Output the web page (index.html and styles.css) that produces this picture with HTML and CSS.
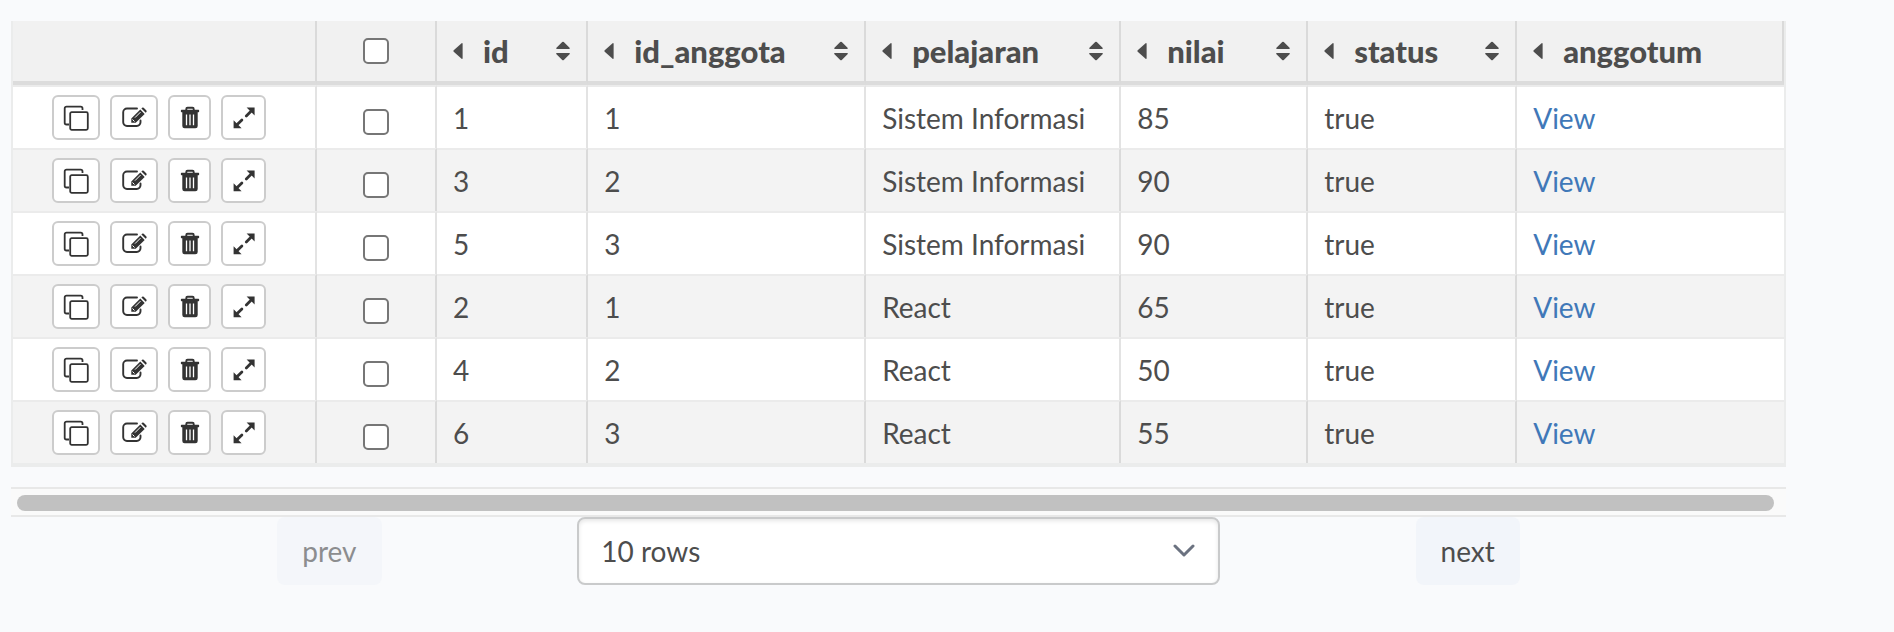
FILE: index.html
```html
<!DOCTYPE html>
<html lang="id">
<head>
<meta charset="utf-8">
<title>nilai</title>
<link rel="stylesheet" href="styles.css">
</head>
<body>
<svg class="sprite" aria-hidden="true">
  <symbol id="clone" viewBox="0 0 26 26">
    <path d="M6 19.500H3.500a1.800 1.800 0 0 1-1.800-1.800V3.500a1.800 1.800 0 0 1 1.800-1.800h14.200a1.800 1.800 0 0 1 1.800 1.800V5" fill="none" stroke="currentColor" stroke-width="1.800"/>
    <rect x="7.200" y="7.200" width="17.600" height="17.600" rx="1.500" fill="none" stroke="currentColor" stroke-width="1.800"/>
  </symbol>
  <symbol id="edit" viewBox="0 0 26 26">
    <path d="M16 3.500H6A3.800 3.800 0 0 0 2.200 7.300v9.900A3.800 3.800 0 0 0 6 21h9.700a3.800 3.800 0 0 0 3.800-3.800V15.500" fill="none" stroke="currentColor" stroke-width="1.900" stroke-linecap="round"/>
    <path d="M10.300 17.800v-4.400L19.300 4.500l4.400 4.400L14.700 17.800zM20.400 3.500l.7-.7q.8-.6 1.600 0l2.700 2.700q.6.800 0 1.600l-.7.700z" fill="currentColor"/>
    <path d="M14 12.600l5.500-5.500M11.500 14.500l2 2" stroke="#fff" stroke-width="1" fill="none"/>
  </symbol>
  <symbol id="trash" viewBox="0 0 20 26">
    <path d="M6.300 5.500V4q0-1.200 1.200-1.200h5q1.200 0 1.200 1.200v1.500" fill="none" stroke="currentColor" stroke-width="1.900"/>
    <path d="M1.500 4.800h17q.7 0 .7 1.200t-.7 1.200h-17Q.8 7.200.8 6t.7-1.200z" fill="currentColor"/>
    <path d="M2.300 7h15.400v14q0 2.300-2.300 2.300H4.600Q2.300 23.300 2.300 21z" fill="currentColor"/>
    <path d="M6.500 9.500v10.800M10 9.500v10.800M13.500 9.500v10.800" stroke="#fff" stroke-width="1.300"/>
  </symbol>
  <symbol id="expand" viewBox="0 0 22 26">
    <path d="M13.600 2.600H21.600V10.600zM8.600 23.200H.6V15.200z" fill="currentColor"/>
    <path d="M13.300 10.900L18 6.200M4.200 19.600l4.700-4.700" stroke="currentColor" stroke-width="2.800" stroke-linecap="round"/>
  </symbol>
  <symbol id="caret" viewBox="0 0 10 18">
    <path d="M9.600 1.500v15q-.3.800-1 .3L.7 9.800q-.7-.8 0-1.600l7.900-7q.7-.5 1 .3z" fill="currentColor"/>
  </symbol>
  <symbol id="sort" viewBox="0 0 14 20">
    <path d="M6.200 1q.8-.7 1.600 0l6 6q.3.800-.6.900H.8q-.9-.1-.6-.9zM6.200 19q.8.700 1.600 0l6-6q.3-.8-.6-.9H.8q-.9.100-.6.900z" fill="currentColor"/>
  </symbol>
</svg>
<main class="grid">
  <table class="table">
    <colgroup>
      <col class="c-actions"><col class="c-check"><col class="c-id"><col class="c-member"><col class="c-subject"><col class="c-score"><col class="c-status"><col>
    </colgroup>
    <thead>
      <tr>
        <th></th>
        <th class="pick"><input type="checkbox" class="box" aria-label="all"></th>
        <th><div class="head"><svg class="caret"><use href="#caret"/></svg><span>id</span><svg class="sort"><use href="#sort"/></svg></div></th>
        <th><div class="head"><svg class="caret"><use href="#caret"/></svg><span>id_anggota</span><svg class="sort"><use href="#sort"/></svg></div></th>
        <th><div class="head"><svg class="caret"><use href="#caret"/></svg><span>pelajaran</span><svg class="sort"><use href="#sort"/></svg></div></th>
        <th><div class="head"><svg class="caret"><use href="#caret"/></svg><span>nilai</span><svg class="sort"><use href="#sort"/></svg></div></th>
        <th><div class="head"><svg class="caret"><use href="#caret"/></svg><span>status</span><svg class="sort"><use href="#sort"/></svg></div></th>
        <th><div class="head"><svg class="caret"><use href="#caret"/></svg><span>anggotum</span></div></th>
      </tr>
    </thead>
    <tbody id="rows"></tbody>
  </table>
  <div class="scroll"><div class="thumb"></div></div>
  <nav class="pager">
    <button class="page" disabled>prev</button>
    <div class="size">
      <select class="select" aria-label="rows"><option>10 rows</option></select>
      <svg class="chevron" viewBox="0 0 22 14"><path d="M2 2l9 9 9-9" fill="none" stroke="currentColor" stroke-width="3" stroke-linecap="round" stroke-linejoin="round"/></svg>
    </div>
    <button class="page">next</button>
  </nav>
</main>
<script src="rows.js"></script>
</body>
</html>
```
FILE: rows.js
```js
const records = [
  [1, 1, "Sistem Informasi", 85],
  [3, 2, "Sistem Informasi", 90],
  [5, 3, "Sistem Informasi", 90],
  [2, 1, "React", 65],
  [4, 2, "React", 50],
  [6, 3, "React", 55]
];
const action = (icon) =>
  `<button class="action action-${icon}" aria-label="${icon}"><svg class="icon icon-${icon}"><use href="#${icon}"/></svg></button>`;
const actions = ["clone", "edit", "trash", "expand"].map(action).join("");

document.getElementById("rows").innerHTML = records.map((r) => `
  <tr>
    <td><div class="actions">${actions}</div></td>
    <td class="pick"><input type="checkbox" class="box" aria-label="${r[0]}"></td>
    ${r.map((v) => `<td>${v}</td>`).join("")}
    <td>true</td>
    <td><a class="link" href="#">View</a></td>
  </tr>`).join("");
```
FILE: styles.css
```css
* { box-sizing: border-box; }
body {
  margin: 0;
  background: #f9fafc;
  color: #4d4d4d;
  font: 28px/36px Lato, "Noto Sans", sans-serif;
}
.sprite { position: absolute; width: 0; height: 0; }
.grid { margin: 21px 108px 0 11px; }

.table {
  width: 100%;
  table-layout: fixed;
  border-collapse: separate;
  border-spacing: 0;
  border: 2px solid #ebecec;
  border-top: 0;
  border-bottom-width: 4px;
}
.c-actions { width: 304px; }
.c-check { width: 6.78%; }
.c-id { width: 8.53%; }
.c-member { width: 15.7%; }
.c-subject { width: 14.4%; }
.c-score { width: 10.56%; }
.c-status { width: 11.8%; }

th, td { padding: 0 16px; text-align: left; border-right: 2px solid #dadada; }
th { height: 64px; background: #f1f1f1; border-bottom: 4px solid #dcdcdc; font-size: 31px; font-weight: 900; }
td { height: 63px; background: #fff; border-top: 2px solid #ebebeb; border-right-color: #e3e3e3; }
tr:nth-child(even) td { background: #f3f3f3; border-right-color: #dadada; }
td:last-child { border-right: 0; }

.head { display: flex; align-items: center; }
.caret { width: 10px; height: 18px; margin-right: 20px; }
.sort { width: 14px; height: 20px; margin-left: auto; }

.actions { display: flex; justify-content: center; gap: 10px; padding-right: 10px; }
.action {
  display: flex;
  align-items: center;
  justify-content: center;
  padding: 0;
  height: 45px;
  border: 2px solid #ccc;
  border-radius: 6px;
  background: #fff;
  color: #333;
}
.action-clone, .action-edit { width: 48px; }
.action-trash { width: 43px; }
.action-expand { width: 45px; }
.icon { flex: none; height: 26px; }
.icon-clone, .icon-edit { width: 26px; }
.icon-trash { width: 20px; }
.icon-expand { width: 22px; }

.pick { text-align: center; }
.box {
  appearance: none;
  display: block;
  width: 26px;
  height: 26px;
  margin: 0 auto;
  border: 2px solid #767676;
  border-radius: 5px;
  background: #fff;
}
td.pick { padding-top: 9px; }
.link { color: #4078b8; text-decoration: none; }

.scroll {
  margin-top: 20px;
  padding: 6px 12px 4px 6px;
  border: solid #e8e8e8;
  border-width: 2px 0;
  background: #fafafa;
}
.thumb { height: 16px; border-radius: 8px; background: #c1c1c1; }

.pager { display: flex; justify-content: space-between; padding: 0 15%; }
.page {
  height: 68px;
  padding: 0 25px;
  border: 0;
  border-radius: 8px;
  background: #f2f5fa;
  color: inherit;
  font: inherit;
}
.page:disabled { color: #8c8d8f; background: #f4f6fa; }
.size { position: relative; width: 51.7%; }
.select {
  appearance: none;
  width: 100%;
  height: 68px;
  padding: 0 22px;
  border: 2px solid #c9cacb;
  border-radius: 8px;
  background: #fff;
  box-shadow: inset 0 2px 4px #0000001a;
  color: inherit;
  font: inherit;
}
.chevron { position: absolute; right: 25px; top: 27px; width: 22px; height: 14px; color: #6b7280; pointer-events: none; }
```
